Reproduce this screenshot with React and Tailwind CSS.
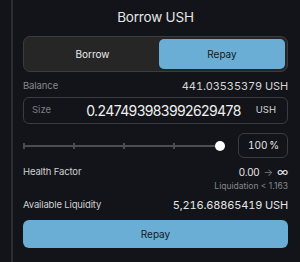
export default function App() {
  const font = { fontFamily: 'Inter, "Noto Sans", sans-serif' };
  return (
    <div className="w-[300px] h-[262px] bg-[#121419] flex overflow-hidden" style={font}>
      <div className="w-[11px] shrink-0" />
      <div className="w-[289px] min-w-0 shrink-0 border-l-2 border-[#2a2c31] pl-[10px] pr-[12px] flex flex-col">
        <div className="pt-[8px] h-[26px] leading-[18px] text-center text-[13.5px] tracking-[-0.2px] text-[#e6e6e6]">Borrow USH</div>
        <div className="mt-[10px] h-[36px] rounded-[7px] border border-[#3b3c3f] bg-[#262626] p-[2px] flex">
          <div className="flex-1 flex items-center justify-center text-[10px] text-[#ececec]">Borrow</div>
          <div className="w-[126px] rounded-[5px] bg-[#6aaed6] flex items-center justify-center text-[10px] text-[#15191e]">Repay</div>
        </div>
        <div className="mt-[6px] h-[16px] flex items-center justify-between text-[9.5px] tracking-[-0.1px]">
          <span className="text-[#85878c]">Balance</span>
          <span className="text-[#d6d6d6] tabular-nums text-[11px]">441.03535379 USH</span>
        </div>
        <div className="mt-[3px] h-[27px] rounded-[6px] border border-[#3b3c3f] flex items-center pl-[8px] pr-[11px] min-w-0">
          <span className="text-[9.5px] text-[#7b7d82]">Size</span>
          <span className="ml-auto text-[14px] tracking-[-0.6px] text-[#f0f0f0] whitespace-nowrap">0.247493983992629478</span>
          <span className="ml-[15px] text-[9.5px] text-[#d6d6d6]">USH</span>
        </div>
        <div className="mt-[9px] h-[25px] flex items-center">
          <div className="relative w-[202px] h-[10px]">
            <div className="absolute left-0 right-[6px] top-[4px] h-[2px] bg-[#4c4d52]" />
            {[0, 50, 100, 150].map((x) => (
              <div key={x} className="absolute top-[2px] w-[1.5px] h-[6px] bg-[#4c4d52]" style={{ left: x }} />
            ))}
            <div className="absolute right-[0px] top-0 w-[10px] h-[10px] rounded-full bg-white" />
          </div>
          <div className="ml-auto w-[50px] h-[25px] rounded-[6px] border border-[#3b3c3f] flex items-center pl-[9px] pr-[8px] text-[10px] text-[#e6e6e6]">
            <span className="tabular-nums">100</span>
            <span className="ml-auto">%</span>
          </div>
        </div>
        <div className="mt-[6px] h-[16px] flex items-center justify-between text-[9.5px] tracking-[-0.15px]">
          <span className="text-[#cfd0d2]">Health Factor</span>
          <span className="text-[#e6e6e6] flex items-center gap-[4px]">
            <span className="text-[10px]">0.00</span>
            <span className="text-[#7b7d82] text-[10px]">→</span>
            <span className="text-[12px] leading-none">∞</span>
          </span>
        </div>
        <div className="h-[12px] flex items-center justify-end text-[8.5px] text-[#85878c]">Liquidation &lt; 1.163</div>
        <div className="mt-[5px] h-[16px] flex items-center justify-between text-[9.5px] tracking-[-0.15px]">
          <span className="text-[#cfd0d2]">Available Liquidity</span>
          <span className="text-[#e6e6e6] tabular-nums text-[11px]">5,216.68865419 USH</span>
        </div>
        <div className="mt-[7px] h-[28px] rounded-[6px] bg-[#6aaed6] flex items-center justify-center text-[10px] text-[#15191e]">Repay</div>
      </div>
    </div>
  );
}
